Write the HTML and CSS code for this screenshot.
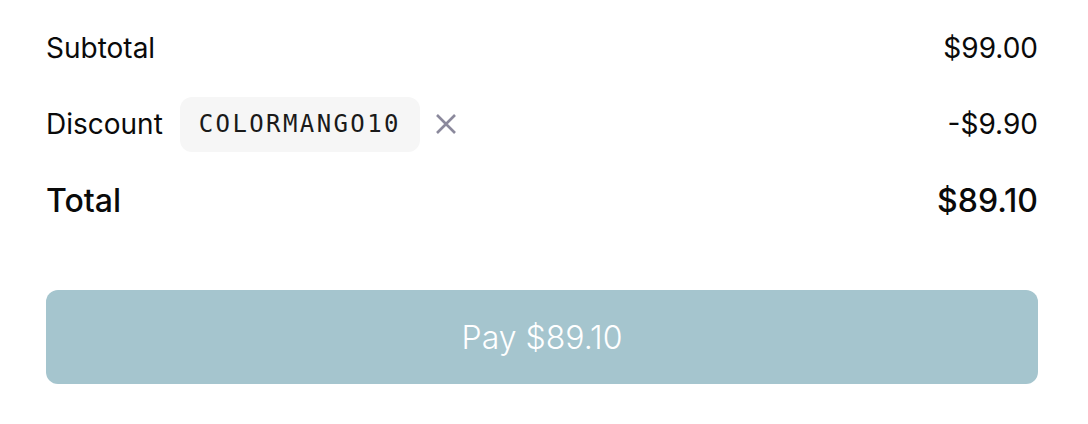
FILE: index.html
```html
<!DOCTYPE html>
<html>
<head>
<meta charset="utf-8">
<link rel="stylesheet" href="styles.css">
</head>
<body>
<div class="summary">
  <div class="row">
    <span class="label">Subtotal</span>
    <span class="amount">$99.00</span>
  </div>
  <div class="row">
    <div class="discount">
      <span class="label">Discount</span>
      <span class="code">COLORMANGO10</span>
      <button class="remove" aria-label="Remove">
        <svg width="22" height="22" viewBox="0 0 22 22"><path d="M2 2L20 20M20 2L2 20" stroke="#8b899c" stroke-width="2.6" stroke-linecap="butt"/></svg>
      </button>
    </div>
    <span class="amount">-$9.90</span>
  </div>
  <div class="row total">
    <span class="label">Total</span>
    <span class="amount">$89.10</span>
  </div>
  <button class="pay">Pay $89.10</button>
</div>
</body>
</html>
```
FILE: styles.css
```css
html, body { margin: 0; background: #fff; }
body { font-family: Inter, "Noto Sans", sans-serif; color: #0a0a0a; }
.summary { padding: 20px 50px 0 46px; display: flex; flex-direction: column; }
.row { display: flex; justify-content: space-between; align-items: center; height: 56px; font-size: 28px; margin-bottom: 20px; }
.discount { display: flex; align-items: center; }
.code { margin-left: 17px; background: #f6f6f6; border-radius: 12px; height: 55px; width: 240px; display: flex; align-items: center; justify-content: center; font-family: "DejaVu Sans Mono", monospace; font-size: 24px; letter-spacing: 2.4px; color: #1a1a1a; }
.remove { margin-left: 15px; border: 0; background: none; padding: 0; display: flex; }
.total { font-size: 32px; font-weight: 500; }
.pay { margin-top: 42px; height: 94px; border: 0; border-radius: 12px; background: #a5c5ce; color: #fff; font-family: Inter, sans-serif; font-size: 32px; font-weight: 300; }
```
